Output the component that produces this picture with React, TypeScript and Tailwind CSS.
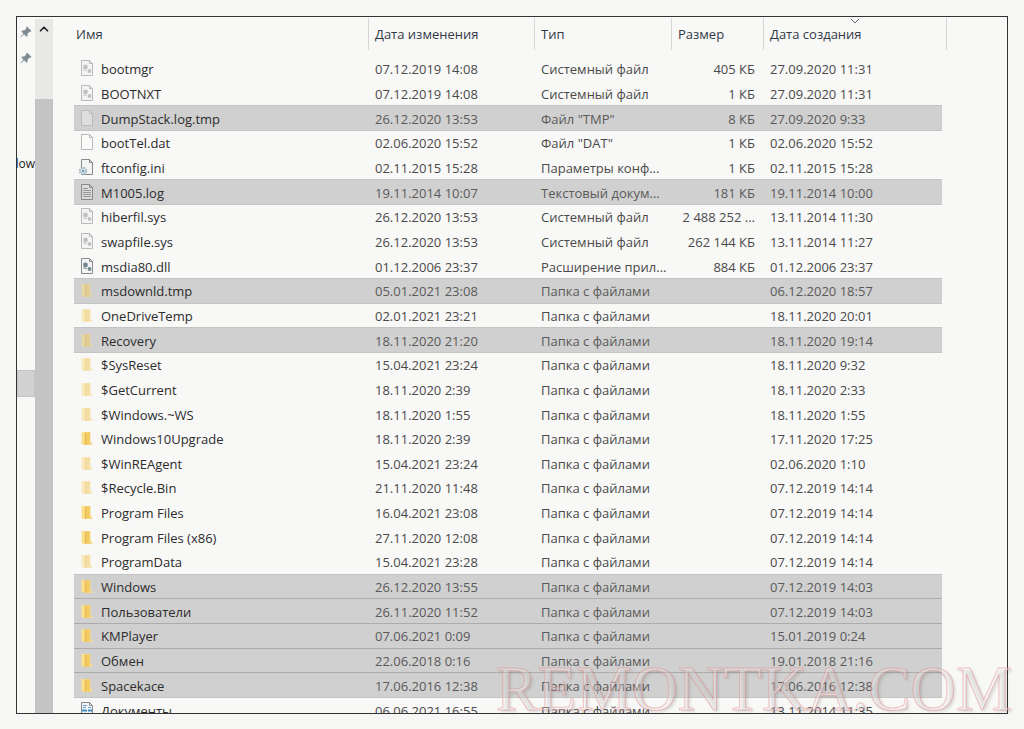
import { ChevronUp } from 'lucide-react';
import { clsx } from 'clsx';

type IconKind = 'system' | 'blank' | 'config' | 'text' | 'dll' | 'folder' | 'folderHidden' | 'document';

interface FileRow {
  name: string;
  modified: string;
  type: string;
  size?: string;
  created: string;
  icon: IconKind;
  selected?: boolean;
}

const FOLDER = 'Папка с файлами';

const FILES: FileRow[] = [
  { name: 'bootmgr', modified: '07.12.2019 14:08', type: 'Системный файл', size: '405 КБ', created: '27.09.2020 11:31', icon: 'system' },
  { name: 'BOOTNXT', modified: '07.12.2019 14:08', type: 'Системный файл', size: '1 КБ', created: '27.09.2020 11:31', icon: 'system' },
  { name: 'DumpStack.log.tmp', modified: '26.12.2020 13:53', type: 'Файл "TMP"', size: '8 КБ', created: '27.09.2020 9:33', icon: 'blank', selected: true },
  { name: 'bootTel.dat', modified: '02.06.2020 15:52', type: 'Файл "DAT"', size: '1 КБ', created: '02.06.2020 15:52', icon: 'blank' },
  { name: 'ftconfig.ini', modified: '02.11.2015 15:28', type: 'Параметры конф...', size: '1 КБ', created: '02.11.2015 15:28', icon: 'config' },
  { name: 'M1005.log', modified: '19.11.2014 10:07', type: 'Текстовый докум...', size: '181 КБ', created: '19.11.2014 10:00', icon: 'text', selected: true },
  { name: 'hiberfil.sys', modified: '26.12.2020 13:53', type: 'Системный файл', size: '2 488 252 ...', created: '13.11.2014 11:30', icon: 'system' },
  { name: 'swapfile.sys', modified: '26.12.2020 13:53', type: 'Системный файл', size: '262 144 КБ', created: '13.11.2014 11:27', icon: 'system' },
  { name: 'msdia80.dll', modified: '01.12.2006 23:37', type: 'Расширение прил...', size: '884 КБ', created: '01.12.2006 23:37', icon: 'dll' },
  { name: 'msdownld.tmp', modified: '05.01.2021 23:08', type: FOLDER, created: '06.12.2020 18:57', icon: 'folderHidden', selected: true },
  { name: 'OneDriveTemp', modified: '02.01.2021 23:21', type: FOLDER, created: '18.11.2020 20:01', icon: 'folderHidden' },
  { name: 'Recovery', modified: '18.11.2020 21:20', type: FOLDER, created: '18.11.2020 19:14', icon: 'folderHidden', selected: true },
  { name: '$SysReset', modified: '15.04.2021 23:24', type: FOLDER, created: '18.11.2020 9:32', icon: 'folderHidden' },
  { name: '$GetCurrent', modified: '18.11.2020 2:39', type: FOLDER, created: '18.11.2020 2:33', icon: 'folderHidden' },
  { name: '$Windows.~WS', modified: '18.11.2020 1:55', type: FOLDER, created: '18.11.2020 1:55', icon: 'folderHidden' },
  { name: 'Windows10Upgrade', modified: '18.11.2020 2:39', type: FOLDER, created: '17.11.2020 17:25', icon: 'folder' },
  { name: '$WinREAgent', modified: '15.04.2021 23:24', type: FOLDER, created: '02.06.2020 1:10', icon: 'folderHidden' },
  { name: '$Recycle.Bin', modified: '21.11.2020 11:48', type: FOLDER, created: '07.12.2019 14:14', icon: 'folderHidden' },
  { name: 'Program Files', modified: '16.04.2021 23:08', type: FOLDER, created: '07.12.2019 14:14', icon: 'folder' },
  { name: 'Program Files (x86)', modified: '27.11.2020 12:08', type: FOLDER, created: '07.12.2019 14:14', icon: 'folder' },
  { name: 'ProgramData', modified: '15.04.2021 23:28', type: FOLDER, created: '07.12.2019 14:14', icon: 'folderHidden' },
  { name: 'Windows', modified: '26.12.2020 13:55', type: FOLDER, created: '07.12.2019 14:03', icon: 'folder', selected: true },
  { name: 'Пользователи', modified: '26.11.2020 11:52', type: FOLDER, created: '07.12.2019 14:03', icon: 'folder', selected: true },
  { name: 'KMPlayer', modified: '07.06.2021 0:09', type: FOLDER, created: '15.01.2019 0:24', icon: 'folder', selected: true },
  { name: 'Обмен', modified: '22.06.2018 0:16', type: FOLDER, created: '19.01.2018 21:16', icon: 'folder', selected: true },
  { name: 'Spacekace', modified: '17.06.2016 12:38', type: FOLDER, created: '17.06.2016 12:38', icon: 'folder', selected: true },
  { name: 'Документы', modified: '06.06.2021 16:55', type: FOLDER, created: '13.11.2014 11:35', icon: 'document' },
];

const COLUMNS = [
  { label: 'Имя', pad: 'pl-[2px]' },
  { label: 'Дата изменения', pad: 'pl-[6px]' },
  { label: 'Тип', pad: 'pl-[6px]' },
  { label: 'Размер', pad: 'pl-[6px]' },
  { label: 'Дата создания', pad: 'pl-[6px]', sorted: true },
];

function FolderIcon({ hidden }: { hidden?: boolean }) {
  return (
    <svg viewBox="0 0 16 18" className={clsx('h-[18px] w-4 shrink-0', hidden && 'opacity-55')} aria-hidden>
      <path d="M6 2.2h5.5v9.3l1.8 1.5v2H6z" fill="#f6dc92" />
      <path d="M6 2.2h5v12.3H6z" fill="#f3cc66" />
      <path d="M2.5 1.5l4 1.2v12.6l-4-1.2z" fill="#fbe08c" />
      <path d="M5.8 2.5v12.8l1.4-.5V2.8z" fill="#e8bb50" />
    </svg>
  );
}

function FileIcon({ kind }: { kind: IconKind }) {
  if (kind === 'folder' || kind === 'folderHidden') return <FolderIcon hidden={kind === 'folderHidden'} />;

  const dark = kind === 'dll' || kind === 'config' || kind === 'text' || kind === 'document';
  const stroke = dark ? '#858a8e' : '#bababa';
  return (
    <svg viewBox="0 0 16 18" className="h-[18px] w-4 shrink-0 overflow-visible" fill="none" aria-hidden>
      <path
        d="M2.5 .5h8l3 3v12h-11z"
        fill={kind === 'blank' ? '#ffffff' : '#f4f4f4'}
        fillOpacity={kind === 'blank' || kind === 'text' ? 0.3 : 1}
        stroke={stroke}
      />
      <path d="M10.5 .5v3h3" stroke={stroke} />
      {(kind === 'system' || kind === 'dll') && (
        <g stroke={kind === 'dll' ? '#708791' : '#c0c2c4'}>
          <circle cx="6.5" cy="7" r="1.2" strokeWidth="2.4" />
          <circle cx="10.5" cy="11" r=".9" strokeWidth="2" />
          <path d="M4.5 10l3 .5" />
        </g>
      )}
      {kind === 'text' && <path d="M4 4.5h5M4 6.5h8M4 8.5h8M4 10.5h8M4 12.5h8" stroke="#979797" />}
      {kind === 'config' && (
        <g>
          <circle cx="4" cy="12" r="3.2" fill="#e4edf2" stroke="#9eb2bd" strokeWidth="2" strokeDasharray="1.6 .9" />
          <circle cx="4" cy="12" r="1.3" fill="#7699ad" />
        </g>
      )}
      {kind === 'document' && (
        <g>
          <path d="M4 3.5h4M4 5.5h3M9 5.5h3M4 11.5h4M9 11.5h3M4 13.5h8" stroke="#64a3ce" />
          <path d="M3 7.5h5v2H3zM9 7.5h4v2H9z" fill="#3f8fc4" />
        </g>
      )}
    </svg>
  );
}

function Pin() {
  return (
    <svg viewBox="0 0 12 12" className="size-3" aria-hidden>
      <path d="M7 .5L11.5 5l-1 .8-1-.1-2 2 .1 2-1 1L4 8.2.8 11.3l-.4-.4L3.4 7.6 1.3 5.3l1-.9 2 .1 2-2-.1-1z" fill="#7f8b93" />
    </svg>
  );
}

function Sidebar() {
  return (
    <aside className="flex w-[18px] shrink-0 flex-col overflow-hidden">
      <div className="flex flex-col items-start gap-[14px] pt-[9px] pl-[3px]">
        <Pin />
        <Pin />
      </div>
      <span className="mt-[90px] flex justify-end text-xs leading-5 text-[#222]">dow</span>
      <span className="mt-[196px] h-[27px] border border-[#c4c4c4] bg-[#d2d2d2]" />
    </aside>
  );
}

function ScrollBar() {
  return (
    <div className="mt-[2px] flex w-[18px] shrink-0 flex-col bg-[#e8e8e7]">
      <button type="button" aria-label="Вверх" className="flex h-[80px] justify-center pt-[3px]">
        <ChevronUp className="size-[14px] text-[#222]" strokeWidth={3} />
      </button>
      <div className="flex-1 bg-[#c4c4c4]" />
    </div>
  );
}

function SortMark() {
  return (
    <svg viewBox="0 0 10 6" className="absolute top-0 left-[86px] h-[6px] w-[10px]" fill="none" aria-hidden>
      <path d="M1 1l4 4 4-4" stroke="#666" />
    </svg>
  );
}

function FileTable() {
  return (
    <table className="h-[calc(100%+10px)] w-full table-fixed border-separate border-spacing-0 text-left">
      <colgroup>
        <col className="w-[295px]" />
        <col className="w-[166px]" />
        <col className="w-[137px]" />
        <col className="w-[92px]" />
        <col className="w-[178px]" />
        <col className="w-[5px]" />
        <col />
      </colgroup>
      <thead>
        <tr className="h-10">
          {COLUMNS.map((col, i) => (
            <th key={col.label} className="p-0 align-top font-normal">
              <button
                type="button"
                className={clsx(
                  'relative mt-px flex h-8 w-full items-center pt-[2px] whitespace-nowrap text-[#333a47]',
                  i < 4 && 'border-r border-[#d6d6d6]',
                  col.pad,
                )}
              >
                {col.label}
                {col.sorted && <SortMark />}
              </button>
            </th>
          ))}
          <th className="p-0 align-top">
            <span className="mt-px block h-8 border-r border-[#d6d6d6]" />
          </th>
          <th />
        </tr>
      </thead>
      <tbody>
        {FILES.map((file, i) => {
          const nextSelected = FILES[i + 1]?.selected;
          const cell = clsx(
            'border-b pt-px leading-5 whitespace-nowrap',
            file.selected && nextSelected && 'border-[#acacac]',
            !file.selected && !nextSelected && 'border-transparent',
            file.selected !== nextSelected && (file.selected || nextSelected) && 'border-[#c4c4c4]',
            file.selected ? 'bg-[#d0d0d0] text-[#5a5a5a]' : 'text-[#4a4a4a]',
          );
          return (
            <tr key={file.name}>
              <td className={clsx(cell, 'pl-[5px]')}>
                <span className="flex items-center gap-[6px] text-[#2c2c2c]">
                  <FileIcon kind={file.icon} />
                  {file.name}
                </span>
              </td>
              <td className={clsx(cell, 'pl-[6px]')}>{file.modified}</td>
              <td className={clsx(cell, 'pl-[6px]')}>{file.type}</td>
              <td className={clsx(cell, 'pr-[9px] text-right')}>{file.size}</td>
              <td className={clsx(cell, 'pl-[6px]')}>{file.created}</td>
              <td />
              <td />
            </tr>
          );
        })}
      </tbody>
    </table>
  );
}

export default function App() {
  return (
    <main className="relative h-screen overflow-hidden bg-[#f6f6f5] p-4 font-['Open_Sans','Noto_Sans',sans-serif] text-[13px]">
      <div className="flex h-[calc(100%+1px)] overflow-hidden border border-[#333] bg-[#f8f8f7]">
        <Sidebar />
        <ScrollBar />
        <div className="min-w-0 flex-1 pl-[21px]">
          <FileTable />
        </div>
      </div>
      <div className="pointer-events-none absolute right-3 bottom-2 font-['Liberation_Serif',serif] text-[63px] leading-none text-white/30 [-webkit-text-stroke:1px_rgba(228,140,140,0.5)] [text-shadow:2px_2px_3px_rgba(0,0,0,0.13)]">
        REMONTKA.COM
      </div>
    </main>
  );
}
